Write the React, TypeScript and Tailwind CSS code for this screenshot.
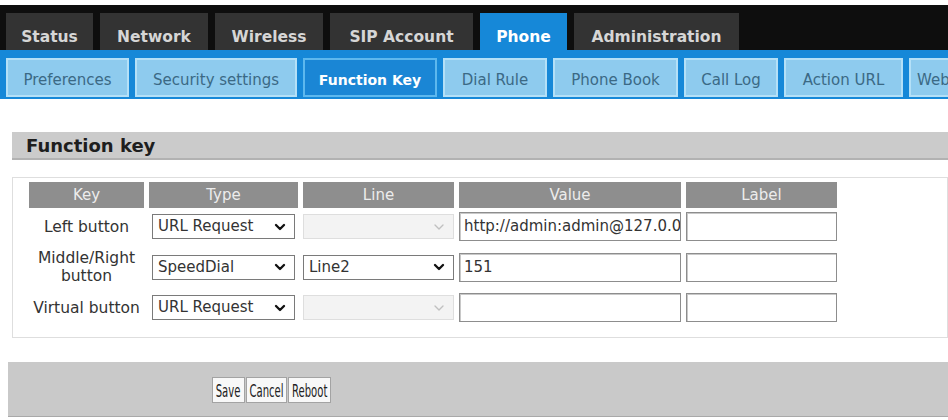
import { ChevronDown } from "lucide-react";
import clsx from "clsx";

const topTabs = [
  { label: "Status", w: "w-[87px]" },
  { label: "Network", w: "w-[108px]" },
  { label: "Wireless", w: "w-[108px]" },
  { label: "SIP Account", w: "w-[143px]" },
  { label: "Phone", w: "w-[87px]", active: true },
  { label: "Administration", w: "w-[165px]" },
];

const subTabs = [
  { label: "Preferences", w: "w-[123px] justify-center" },
  { label: "Security settings", w: "w-[162px] justify-center" },
  { label: "Function Key", w: "w-[134px] justify-center", active: true },
  { label: "Dial Rule", w: "w-[104px] justify-center" },
  { label: "Phone Book", w: "w-[125px] justify-center" },
  { label: "Call Log", w: "w-[94px] justify-center" },
  { label: "Action URL", w: "w-[119px] justify-center" },
  { label: "Web Dial", w: "w-[150px] justify-start pl-[6px]" },
];

function FakeSelect({ value, disabled, className }: { value?: string; disabled?: boolean; className?: string }) {
  return (
    <div
      className={clsx(
        "flex h-[25px] items-center justify-between border pl-[5px] pr-[6px] text-[15px] text-[#333]",
        disabled ? "border-[#dedede] bg-[#f3f3f3]" : "border-[#7a7a7a] bg-white",
        className,
      )}
    >
      <span className="whitespace-nowrap">{value}</span>
      <ChevronDown
        size={16}
        strokeWidth={disabled ? 2 : 3.5}
        className={disabled ? "text-[#c0c0c0]" : "text-[#111]"}
      />
    </div>
  );
}

function TextBox({ value }: { value?: string }) {
  return (
    <div className="flex h-[29px] w-full items-center overflow-hidden whitespace-nowrap border border-[#8d8d8d] bg-white px-[4px] text-[15px] text-[#333] shadow-[inset_1px_1px_0_#c8c8c8]">
      {value}
    </div>
  );
}

function Btn({ label, w }: { label: string; w: string }) {
  return (
    <div className={clsx("flex h-[26px] items-center justify-center overflow-hidden border border-[#a3a3a3] bg-[#f8f8f8]", w)}>
      <span className="inline-block scale-x-[0.56] text-[18px] text-[#222]">{label}</span>
    </div>
  );
}

export default function App() {
  const rows = [
    { key: "Left button", type: "URL Request", line: "", lineDisabled: true, value: "http://admin:admin@127.0.0.1/Key=OK" },
    { key: "Middle/Right button", type: "SpeedDial", line: "Line2", lineDisabled: false, value: "151" },
    { key: "Virtual button", type: "URL Request", line: "", lineDisabled: true, value: "" },
  ];

  return (
    <div className="h-[420px] w-[948px] overflow-hidden bg-white pt-[5px] font-['DejaVu_Sans',sans-serif]">
      {/* main tabs */}
      <div className="flex h-[45px] items-end gap-[7px] bg-[#0e0e0e] pl-[6px]">
        {topTabs.map((t) => (
          <div
            key={t.label}
            className={clsx(
              "flex h-[37px] shrink-0 items-center justify-center pt-[12px] text-[15.5px] font-bold",
              t.w,
              t.active ? "bg-[#1688d8] text-white" : "bg-[#333333] text-[#d6d6d6]",
            )}
          >
            {t.label}
          </div>
        ))}
      </div>

      {/* sub tabs */}
      <div className="flex gap-[6px] overflow-hidden bg-[#1688d8] pb-[2px] pl-[6px] pt-[8px]">
        {subTabs.map((t) => (
          <div
            key={t.label}
            className={clsx(
              "flex h-[39px] shrink-0 items-center whitespace-nowrap border-2 pt-[5px]",
              t.w,
              t.active
                ? "border-[#5db8ee] bg-[#1a86d5] text-[14px] font-bold text-white"
                : "border-[#b4e0f7] bg-[#8ecbee] text-[15px] text-[#3b6985]",
            )}
          >
            {t.label}
          </div>
        ))}
      </div>

      {/* section title */}
      <div className="ml-[12px] mt-[33px] flex h-[28px] items-center border-b-2 border-[#b2b2b2] bg-[#cbcbcb] pl-[14px] text-[18px] font-bold text-[#1e1e1e]">
        Function key
      </div>

      {/* table */}
      <div className="ml-[12px] mt-[17px] h-[161px] border border-[#dedede] pl-[16px] pt-[4px]">
        <div className="grid grid-cols-[115px_149px_151px_222px_151px] grid-rows-[26px_31px_44px_31px] items-center gap-x-[5px] gap-y-[3px]">
          {["Key", "Type", "Line", "Value", "Label"].map((h) => (
            <div key={h} className="flex h-full items-center justify-center bg-[#8e8e8e] text-[15px] text-[#ececec]">
              {h}
            </div>
          ))}
          {rows.map((r) => (
            <div key={r.key} className="contents">
              <div className="text-center text-[15.5px] leading-[18px] text-[#333]">
                {r.key === "Middle/Right button" ? (
                  <>
                    Middle/Right
                    <br />
                    button
                  </>
                ) : (
                  r.key
                )}
              </div>
              <FakeSelect value={r.type} className="mx-[3px]" />
              <FakeSelect value={r.line} disabled={r.lineDisabled} />
              <TextBox value={r.value} />
              <TextBox />
            </div>
          ))}
        </div>
      </div>

      {/* buttons */}
      <div className="ml-[8px] mt-[24px] flex h-[55px] gap-[1px] border-b border-[#a9a9a9] bg-[#c9c9c9] pl-[204px] pt-[15px]">
        <Btn label="Save" w="w-[33px]" />
        <Btn label="Cancel" w="w-[41px]" />
        <Btn label="Reboot" w="w-[43px]" />
      </div>
    </div>
  );
}
